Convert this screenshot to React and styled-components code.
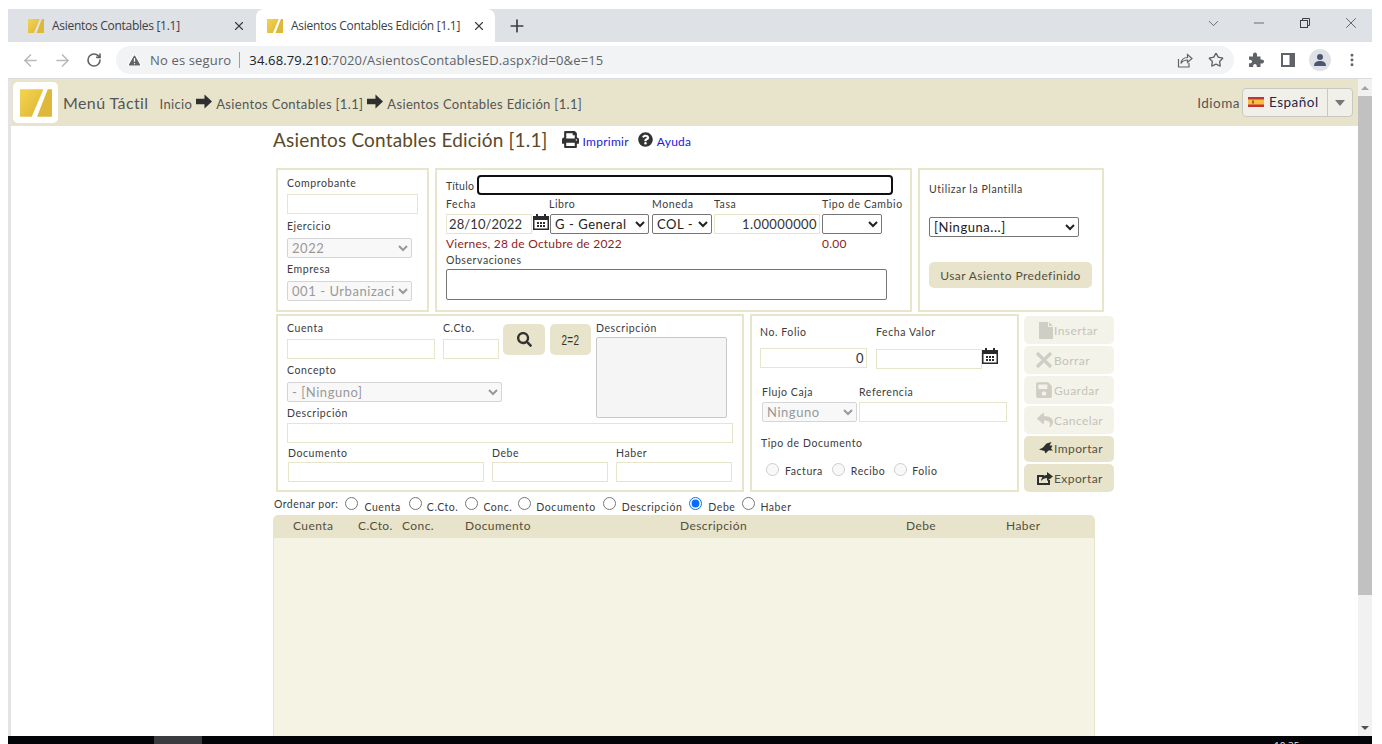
import React from "react";
import styled, { createGlobalStyle } from "styled-components";
import { FaPrint, FaQuestionCircle, FaSearch, FaSave, FaReply } from "react-icons/fa";
import { ArrowLeft, ArrowRight, RotateCw, TriangleAlert, Star, X, Plus, ChevronDown, Minus, EllipsisVertical } from "lucide-react";

const Global = createGlobalStyle`
  html, body { margin: 0; padding: 0; background: #fff; overflow: hidden; }
  body { font-family: Lato, "Liberation Sans", sans-serif; color: #444; }
  * { box-sizing: border-box; }
`;
const uiFont = `"Open Sans", "Liberation Sans", sans-serif`;
const cream = "#e8e4cc";
const line = "#e8e5cd";

const Screen = styled.div`width:1382px;height:744px;padding:9px 10px 0 8px;display:flex;flex-direction:column;overflow:hidden;`;
const TabStrip = styled.div`height:33px;background:#dee1e6;display:flex;align-items:flex-end;flex:none;`;
const Tab = styled.div`
  width:${p=>p.$w}px;height:33px;display:flex;align-items:center;padding-left:${p=>p.$pl}px;
  background:${p=>p.$active?"#fff":"transparent"};border-radius:8px 8px 0 0;font:12px ${uiFont};letter-spacing:-.28px;color:#3c4043;
  svg.fav{margin-right:8px;flex:none;} span{flex:1;white-space:nowrap;}
`;
const TabClose = styled(X)`margin-right:${p=>p.$m}px;color:#3c4043;flex:none;`;
const NewTab = styled(Plus)`margin:0 0 0 12px;align-self:center;color:#3c4043;`;
const WinControls = styled.div`margin-left:auto;margin-right:-2px;align-self:flex-start;display:flex;align-items:center;height:28px;color:#3c4043;`;
const WinBtn = styled.div`width:46px;display:flex;justify-content:center;`;
const Toolbar = styled.div`height:37px;flex:none;background:#fff;display:flex;align-items:center;padding:0 4px 0 6px;color:#5f6368;border-bottom:1px solid #dadce0;`;
const IconSlot = styled.div`width:32px;height:28px;flex:none;display:flex;align-items:center;justify-content:center;color:${p=>p.$off?"#b6b9bd":"#5f6368"};`;
const Omnibox = styled.div`
  margin:0 6px;width:1118px;height:28px;background:#f1f3f4;border-radius:14px;display:flex;align-items:center;padding:0 2px 0 11px;font:13px ${uiFont};letter-spacing:.15px;color:#5f6368;
`;
const Sep = styled.i`width:1px;height:16px;background:#9aa0a6;margin:0 9px 0 8px;`;
const UrlHost = styled.span`color:#202124;`;
const OmniEnd = styled.div`margin-left:auto;display:flex;align-items:center;`;
const AlertIcon = styled(TriangleAlert)`margin-right:8px;flex:none;`;
const Avatar = styled.div`width:22px;height:22px;border-radius:50%;background:#dee1e6;display:flex;align-items:center;justify-content:center;`;

const Viewport = styled.div`flex:1;min-height:0;display:flex;position:relative;border-left:3px solid #e4e4e4;`;
const Page = styled.div`flex:1;min-width:0;display:flex;flex-direction:column;`;
const Scrollbar = styled.div`width:14px;flex:none;background:#f1f1f1;display:flex;flex-direction:column;align-items:center;`;
const Thumb = styled.div`width:14px;height:499px;background:#c1c1c1;`;
const ScrollArrow = styled.div`height:17px;flex:none;display:flex;align-items:center;justify-content:center;margin-top:${p=>p.$end?"auto":0};
  &::after{content:"";border-left:4px solid transparent;border-right:4px solid transparent;${p=>p.$end?"border-top:4px solid #505050":"border-bottom:4px solid #a3a3a3"};}`;

const Header = styled.header`height:47px;flex:none;background:${cream};display:flex;align-items:center;padding:0 5px 0 2px;`;
const LogoTile = styled.div`width:45px;height:41px;background:#fff;border-radius:5px;display:flex;align-items:center;justify-content:center;margin-right:5px;`;
const Brand = styled.span`font-size:16px;letter-spacing:.4px;color:#555;margin-right:11px;`;
const Crumb = styled.div`display:flex;align-items:center;font-size:13px;letter-spacing:.34px;color:#555;margin-top:3px;
  svg{margin:-5px 4px 0 4px;}`;
const LangWrap = styled.div`margin-left:auto;display:flex;align-items:center;font-size:13.5px;letter-spacing:.5px;color:#555;`;
const LangBox = styled.div`margin-left:2px;width:111px;height:29px;border:1px solid #c9c9c0;border-radius:4px;background:#f0efe8;display:flex;align-items:center;`;
const LangMain = styled.div`width:85px;display:flex;align-items:center;gap:5px;padding:0 0 2px 5px;color:#26264a;font-size:13.5px;height:100%;border-right:1px solid #c9c9c0;`;
const LangCaret = styled.div`flex:1;display:flex;justify-content:center;&::after{content:"";border-left:5px solid transparent;border-right:5px solid transparent;border-top:6px solid #777;}`;

const Body = styled.main`flex:1;min-height:0;padding:0 0 0 262px;overflow:hidden;`;
const TitleRow = styled.div`height:42px;display:flex;align-items:flex-start;padding-top:2px;`;
const H1 = styled.h1`margin:0;font-size:19px;font-weight:400;letter-spacing:.18px;color:#5a4a2a;line-height:24px;`;
const HelpLink = styled.a`display:flex;align-items:center;color:#1a1add;font-size:12px;letter-spacing:.25px;margin-left:${p=>p.$m}px;margin-top:6px;svg{color:#333;margin-right:4px;margin-top:-5px;}`;

const Panels = styled.div`display:flex;margin-left:3px;gap:6px;`;
const Panel = styled.section`width:${p=>p.$w}px;height:${p=>p.$h}px;border:2px solid ${line};flex:none;padding:${p=>p.$pad||"0"};`;
const Row2 = styled(Panels)`margin-top:2px;`;

const Label = styled.label`display:block;font-size:10.5px;letter-spacing:.58px;line-height:13px;color:#3b3b3b;white-space:nowrap;margin:${p=>p.$t||0}px 0 ${p=>p.$b||0}px ${p=>p.$ml||0}px;`;
const Input = styled.input`display:block;width:${p=>p.$w?p.$w+"px":"100%"};height:20px;border:1px solid ${line};background:#fff;padding:0 2px;font:13px Lato,sans-serif;letter-spacing:${p=>p.$ls||".4px"};color:#333;text-align:${p=>p.$right?"right":"left"};outline:none;border-radius:0;margin:${p=>p.$t||0}px 0 0;`;
const Select = styled.select`display:block;flex:none;width:${p=>p.$w}px;height:20px;font:13px Lato,sans-serif;letter-spacing:.55px;margin:${p=>p.$t||0}px 0 0 ${p=>p.$ml||0}px;padding:0;color:${p=>p.disabled?"#999":"#222"};background:${p=>p.disabled?"#f8f8f8":"#fff"};border:1px solid ${p=>p.disabled?"#d5d5d5":"#767676"};border-radius:2px;opacity:1;`;
const Area = styled.textarea`display:block;flex:none;resize:none;width:${p=>p.$w}px;height:${p=>p.$h}px;border:1px solid ${p=>p.disabled?"#c8c8c8":"#767676"};background:${p=>p.disabled?"#f5f5f5":"#fff"};border-radius:2px;margin:${p=>p.$t||0}px 0 0;`;
const Stack = styled.div`display:flex;flex-direction:column;padding-top:${p=>p.$pt||0}px;`;
const Overflowing = styled(Stack)`height:0;overflow:visible;`;

const Grid = styled.div`display:grid;grid-template-columns:${p=>p.$cols};row-gap:${p=>p.$rg||0}px;margin-top:${p=>p.$t||0}px;padding-left:${p=>p.$pl||0}px;`;
const TitleLine = styled.div`display:flex;align-items:center;gap:3px;`;
const TitleInput = styled.input`width:416px;height:20px;border:2px solid #101010;border-radius:4px;outline:none;margin:0;`;
const TitleLabel = styled(Label)`margin-top:2px;letter-spacing:.33px;`;
const Dated = styled.div`display:flex;align-items:center;margin-top:${p=>p.$t||0}px;`;
const Red = styled.div`font-size:12px;letter-spacing:.22px;line-height:14px;color:#8e1d1d;`;

const CreamBtn = styled.button`
  display:flex;align-items:center;justify-content:center;gap:2px;border:none;border-radius:5px;font:12px Lato,sans-serif;letter-spacing:.42px;padding:0;margin:${p=>p.$t||0}px 0 0;
  background:${p=>p.$off?"#f4f3ea":cream};color:${p=>p.$off?"#c4c3b8":"#55503c"};width:${p=>p.$w||90}px;height:${p=>p.$h||28}px;flex:none;
`;
const ActionBtn = styled(CreamBtn)`justify-content:flex-start;gap:1px;padding:0 0 ${p=>p.$pb||0}px 7px;`;
const ActionIcon = styled.span`width:22px;flex:none;display:flex;justify-content:flex-end;align-items:center;color:${p=>p.$off?"#cfcec4":"#2f2f2f"};`;
const SideButtons = styled.div`display:flex;flex-direction:column;gap:2px;margin:2px 0 0 -1px;`;
const NarrowGlyph = styled.span`display:inline-block;font:500 15px "Liberation Sans",sans-serif;color:#333;transform:scaleX(.66);`;
const Radio = styled.input.attrs({type:"radio"})`margin:0;width:13px;height:13px;flex:none;accent-color:#0a6cff;`;
const RadioRow = styled.div`display:flex;align-items:flex-start;margin-top:${p=>p.$t||0}px;padding-left:${p=>p.$pl||0}px;`;
const RadioLabel = styled.span`font-size:10.5px;letter-spacing:.55px;color:#3b3b3b;margin:${p=>p.$top||4}px ${p=>p.$r||0}px 0 ${p=>p.$l||6}px;white-space:nowrap;`;
const OrderLabel = styled.span`font-size:10.5px;letter-spacing:.45px;color:#3b3b3b;margin:1px 7px 0 1px;`;
const Table = styled.div`width:822px;height:221px;margin-top:2px;background:#f5f3e4;border:solid ${line};border-width:0 1px;border-radius:5px 5px 0 0;overflow:hidden;`;
const THead = styled.div`height:23px;padding:0 0 2px 20px;background:${cream};margin:0 -1px;display:grid;grid-template-columns:65px 44px 63px 215px 226px 100px 89px;align-items:center;font-size:12px;letter-spacing:.42px;color:#55503c;`;
const Taskbar = styled.div`height:8px;flex:none;background:#020407;position:relative;overflow:hidden;`;
const TaskItem = styled.div`position:absolute;left:146px;top:0;width:48px;height:8px;background:#3a3b3f;`;
const Clock = styled.div`position:absolute;left:1266px;top:5px;font:10px ${uiFont};line-height:11px;color:#e8e8e8;`;
const CalSvg = styled.svg`flex:none;display:block;margin:${p=>p.$m||"-5px 0 0 1px"};`;

const Logo = ({size=32}) => (
  <svg className="fav" width={size} height={Math.round(size*.86)} viewBox="0 0 30 26">
    <defs><linearGradient id={`g${size}`} x1="0" y1="0" x2="1" y2="1"><stop offset="0" stopColor="#f4d54f"/><stop offset="1" stopColor="#dcb334"/></linearGradient></defs>
    <path d="M0 0H22L11 26H0Z" fill={`url(#g${size})`}/><path d="M26 0H30V26H16Z" fill="#dfb83a"/>
  </svg>
);
const Arrow = () => (<svg width="16" height="15" viewBox="0 0 17 15"><path d="M0 4.5H9V0L17 7.5L9 15V10.5H0Z" fill="#2f2f2f"/></svg>);
const Flag = () => (<svg width="16" height="10" viewBox="0 0 16 10"><rect width="16" height="10" fill="#c8303c"/><rect y="2.5" width="16" height="5" fill="#f2c33d"/><rect x="4" y="3.5" width="2" height="3" fill="#b4552d"/></svg>);
const ImportIcon = () => (<svg width="14" height="13" viewBox="0 0 14 13"><path d="M0 7.5L4 5.5L7.5 1.5L12.5 0L10.5 3.5H13.5L12 6.5L14 8.5L9.5 8.5L6.5 11.5L5.5 9Z" fill="#2f2f2f"/></svg>);
const ExportIcon = () => (<svg width="17" height="15" viewBox="0 0 17 15"><path d="M1 4H8V6H3V12H12V9H14V14H1Z" fill="#2f2f2f"/><path d="M5 10C5.5 6 8 4 11 4V1L17 5.5L11 10V7C9 7 6.5 8 5 10Z" fill="#2f2f2f"/></svg>);
const FileIcon = () => (<svg width="14" height="17" viewBox="0 0 14 17"><path d="M0 0H9V5H14V17H0Z M10 0L14 4H10Z" fill="#cfcec4"/></svg>);
const CrossIcon = () => (<svg width="18" height="18" viewBox="0 0 18 18"><path d="M2 2L16 16M16 2L2 16" stroke="#cfcec4" strokeWidth="3.2"/></svg>);
const Cal = ({m}) => (
  <CalSvg $m={m} width="16" height="16" viewBox="0 0 16 16">
    <path d="M0 2H3V0H5V2H11V0H13V2H16V16H0ZM1.5 6V14.5H14.5V6Z" fill="#2b2b2b" fillRule="evenodd"/>
    <path d="M4 8H6V10H4ZM7 8H9V10H7ZM10 8H12V10H10ZM4 11H6V13H4ZM7 11H9V13H7ZM10 11H12V13H10Z" fill="#2b2b2b"/>
  </CalSvg>
);
const ShareOut = () => (<svg width="17" height="17" viewBox="0 0 17 17" fill="none" stroke="#5f6368" strokeWidth="1.2"><path d="M2.5 7V15H13V11"/><path d="M5 11.5C5.5 7.5 8 5.5 11.5 5.5V2.5L16 6.5L11.5 10.5V8C9 8 6.5 9 5 11.5Z"/></svg>);
const Puzzle = () => (<svg width="16" height="16" viewBox="0 0 16 16" fill="#5f6368"><path d="M1 4.5H5C4.6 1.5 5.6.5 7 .5S9.4 1.5 9 4.5H12.5V7.5C15 7.2 16 8.2 16 9.5S15 11.8 12.5 11.5V15H8.8C9 13 8.2 12 7 12S4.9 13 5.2 15H1V11.2C2.8 11.6 4 10.8 4 9.5S2.8 7.4 1 7.8Z"/></svg>);

export default function App(){
  return (
  <Screen>
    <Global/>
    <TabStrip>
      <Tab $w={248} $pl={20}><Logo size={16}/><span>Asientos Contables [1.1]</span><TabClose size={14} $m={10}/></Tab>
      <Tab $active $w={239} $pl={11}><Logo size={16}/><span>Asientos Contables Edición [1.1]</span><TabClose size={14} $m={9}/></Tab>
      <NewTab size={20}/>
      <WinControls>
        <WinBtn><ChevronDown size={17} strokeWidth={1}/></WinBtn>
        <WinBtn><Minus size={16} strokeWidth={1.1}/></WinBtn>
        <WinBtn><svg width="12" height="12" viewBox="0 0 12 12" fill="none" stroke="#3c4043"><rect x="1.5" y="3.5" width="7" height="7"/><path d="M3.5 3V1.5H10.5V8.5H9"/></svg></WinBtn>
        <WinBtn><X size={18} strokeWidth={1}/></WinBtn>
      </WinControls>
    </TabStrip>
    <Toolbar>
      <IconSlot $off><ArrowLeft size={19}/></IconSlot>
      <IconSlot $off><ArrowRight size={19}/></IconSlot>
      <IconSlot><RotateCw size={16} strokeWidth={2.4}/></IconSlot>
      <Omnibox>
        <AlertIcon size={15} fill="#5f6368" stroke="#fff"/>
        No es seguro<Sep/>
        <span><UrlHost>34.68.79.210</UrlHost>:7020/AsientosContablesED.aspx?id=0&amp;e=15</span>
        <OmniEnd>
          <IconSlot><ShareOut/></IconSlot>
          <IconSlot><Star size={16} strokeWidth={2}/></IconSlot>
        </OmniEnd>
      </Omnibox>
      <IconSlot><Puzzle/></IconSlot>
      <IconSlot><svg width="14" height="14" viewBox="0 0 14 14"><path d="M0 0H14V14H0Z" fill="#5f6368"/><rect x="2" y="2" width="6.5" height="10" fill="#fff"/></svg></IconSlot>
      <IconSlot><Avatar><svg width="14" height="14" viewBox="0 0 14 14" fill="#4c5670"><circle cx="7" cy="4" r="3"/><path d="M1 13C1 9 4 8 7 8C10 8 13 9 13 13Z"/></svg></Avatar></IconSlot>
      <IconSlot><EllipsisVertical size={16} strokeWidth={2.4}/></IconSlot>
    </Toolbar>
    <Viewport>
      <Page>
        <Header>
          <LogoTile><Logo size={32}/></LogoTile>
          <Brand>Menú Táctil</Brand>
          <Crumb>Inicio<Arrow/>Asientos Contables [1.1]<Arrow/>Asientos Contables Edición [1.1]</Crumb>
          <LangWrap>Idioma
            <LangBox><LangMain><Flag/>Español</LangMain><LangCaret/></LangBox>
          </LangWrap>
        </Header>
        <Body>
          <TitleRow>
            <H1>Asientos Contables Edición [1.1]</H1>
            <HelpLink $m={14}><FaPrint size={17}/>Imprimir</HelpLink>
            <HelpLink $m={9}><FaQuestionCircle size={15}/>Ayuda</HelpLink>
          </TitleRow>
          <Panels>
            <Panel $w={153} $h={144} $pad="7px 9px 0 9px">
              <Label>Comprobante</Label>
              <Input $t={4} $w={131}/>
              <Label $t={6} $b={5}>Ejercicio</Label>
              <Select disabled $w={125}><option>2022</option></Select>
              <Label $t={5} $b={5}>Empresa</Label>
              <Select disabled $w={125}><option>001 - Urbanización</option></Select>
            </Panel>
            <Panel $w={477} $h={144} $pad="5px 9px 0 9px">
              <TitleLine><TitleLabel>Título</TitleLabel><TitleInput/></TitleLine>
              <Grid $cols="103px 103px 62px 108px 80px" $t={3} $rg={3}>
                <Label>Fecha</Label><Label>Libro</Label><Label>Moneda</Label><Label>Tasa</Label><Label>Tipo de Cambio</Label>
                <Dated><Input $w={86} $ls=".1px" defaultValue="28/10/2022"/><Cal/></Dated>
                <Select $w={99} $ml={1} defaultValue="G"><option value="G">G - General</option></Select>
                <Select $w={60} defaultValue="C"><option value="C">COL - Colón</option></Select>
                <Input $w={106} $right defaultValue="1.00000000"/>
                <Select $w={60}><option></option></Select>
              </Grid>
              <Grid $cols="376px 100px" $t={3}><Red>Viernes, 28 de Octubre de 2022</Red><Red>0.00</Red></Grid>
              <Label $t={3} $b={2}>Observaciones</Label>
              <Area $w={441} $h={31}/>
            </Panel>
            <Panel $w={186} $h={144} $pad="12px 9px 0 9px">
              <Label $t={1}>Utilizar la Plantilla</Label>
              <Select $t={21} $w={150}><option>[Ninguna...]</option></Select>
              <CreamBtn $t={25} $w={163} $h={26}>Usar Asiento Predefinido</CreamBtn>
            </Panel>
          </Panels>
          <Row2>
            <Panel $w={468} $h={178} $pad="5px 9px 0 9px">
              <Grid $cols="156px 60px 47px 46px 140px">
                <Stack $pt={1}><Label>Cuenta</Label><Input $t={4} $w={148}/></Stack>
                <Stack $pt={1}><Label>C.Cto.</Label><Input $t={4} $w={56}/></Stack>
                <CreamBtn $w={42} $h={31} $t={3}><FaSearch size={15} color="#333"/></CreamBtn>
                <CreamBtn $w={41} $h={31} $t={3}><NarrowGlyph>2=2</NarrowGlyph></CreamBtn>
                <Overflowing $pt={1}><Label>Descripción</Label><Area disabled $w={131} $h={81} $t={2}/></Overflowing>
              </Grid>
              <Label $t={5} $b={5}>Concepto</Label>
              <Select disabled $w={215}><option>- [Ninguno]</option></Select>
              <Label $t={5} $b={3}>Descripción</Label>
              <Input $w={446}/>
              <Grid $cols="204px 124px 120px" $t={4} $pl={1}>
                <Stack><Label>Documento</Label><Input $t={2} $w={196}/></Stack>
                <Stack><Label>Debe</Label><Input $t={2} $w={116}/></Stack>
                <Stack><Label>Haber</Label><Input $t={2} $w={116}/></Stack>
              </Grid>
            </Panel>
            <Panel $w={269} $h={178} $pad="10px 8px 0 8px">
              <Grid $cols="116px 124px">
                <Label>No. Folio</Label><Label>Fecha Valor</Label>
                <Input $t={9} $w={107} $right defaultValue="0"/>
                <Dated $t={10}><Input $w={106}/><Cal m="-6px 0 0 0"/></Dated>
              </Grid>
              <Grid $cols="97px 150px" $t={17} $pl={2}>
                <Label>Flujo Caja</Label><Label>Referencia</Label>
                <Select $t={3} disabled $w={95}><option>Ninguno</option></Select>
                <Input $t={3} $w={148}/>
              </Grid>
              <Label $t={15} $ml={1}>Tipo de Documento</Label>
              <RadioRow $t={13} $pl={6}>
                <Radio disabled/><RadioLabel $top={2} $r={9}>Factura</RadioLabel>
                <Radio disabled/><RadioLabel $top={2} $r={9}>Recibo</RadioLabel>
                <Radio disabled/><RadioLabel $top={2} $l={5}>Folio</RadioLabel>
              </RadioRow>
            </Panel>
            <SideButtons>
              <ActionBtn $off><ActionIcon $off><FileIcon/></ActionIcon>Insertar</ActionBtn>
              <ActionBtn $off><ActionIcon $off><CrossIcon/></ActionIcon>Borrar</ActionBtn>
              <ActionBtn $off><ActionIcon $off><FaSave size={18}/></ActionIcon>Guardar</ActionBtn>
              <ActionBtn $off><ActionIcon $off><FaReply size={16}/></ActionIcon>Cancelar</ActionBtn>
              <ActionBtn $h={26} $pb={2}><ActionIcon><ImportIcon/></ActionIcon>Importar</ActionBtn>
              <ActionBtn><ActionIcon><ExportIcon/></ActionIcon>Exportar</ActionBtn>
            </SideButtons>
          </Row2>
          <RadioRow $t={5}>
            <OrderLabel>Ordenar por:</OrderLabel>
            <Radio/><RadioLabel $r={8}>Cuenta</RadioLabel>
            <Radio/><RadioLabel $r={7} $l={5}>C.Cto.</RadioLabel>
            <Radio/><RadioLabel $r={6} $l={5}>Conc.</RadioLabel>
            <Radio/><RadioLabel $r={7} $l={5}>Documento</RadioLabel>
            <Radio/><RadioLabel $r={7}>Descripción</RadioLabel>
            <Radio defaultChecked/><RadioLabel $r={7}>Debe</RadioLabel>
            <Radio/><RadioLabel $l={5}>Haber</RadioLabel>
          </RadioRow>
          <Table>
            <THead><span>Cuenta</span><span>C.Cto.</span><span>Conc.</span><span>Documento</span><span>Descripción</span><span>Debe</span><span>Haber</span></THead>
          </Table>
        </Body>
      </Page>
      <Scrollbar><ScrollArrow/><Thumb/><ScrollArrow $end/></Scrollbar>
    </Viewport>
    <Taskbar><TaskItem/><Clock>10:35</Clock></Taskbar>
  </Screen>);
}
